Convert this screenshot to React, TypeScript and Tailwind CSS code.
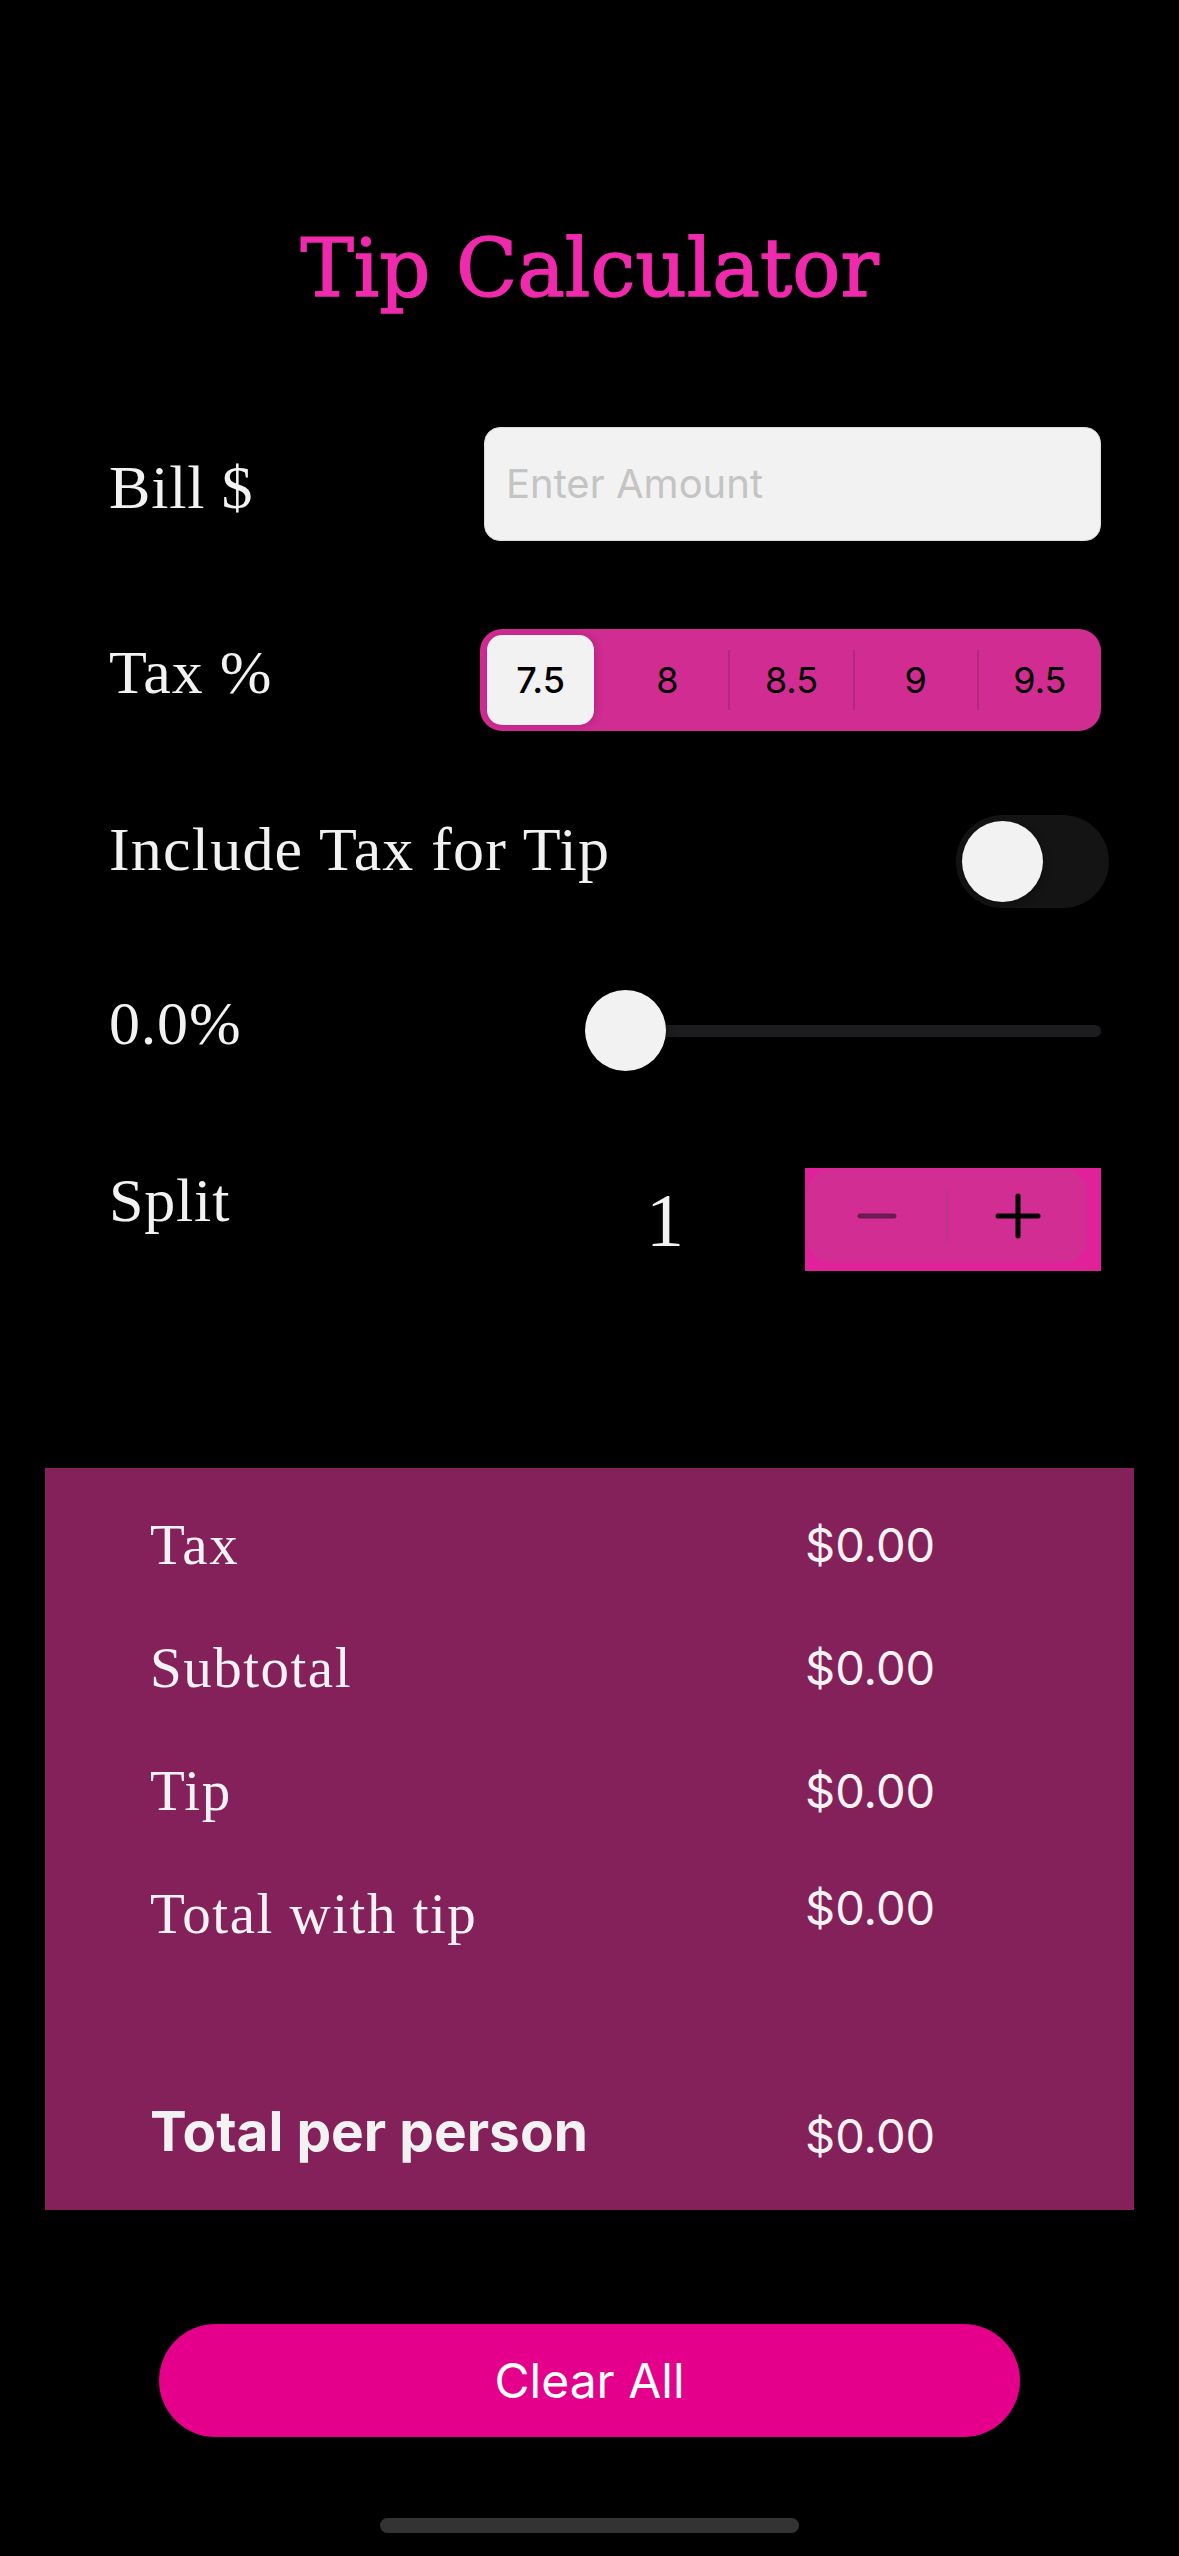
import { useState } from "react";

const serif = "font-['Liberation_Serif',serif]";
const sans = "font-['Inter',sans-serif]";

const taxRates = ["7.5", "8", "8.5", "9", "9.5"];

const results = [
  { label: "Tax", value: "$0.00", nudge: "" },
  { label: "Subtotal", value: "$0.00", nudge: "" },
  { label: "Tip", value: "$0.00", nudge: "" },
  { label: "Total with tip", value: "$0.00", nudge: "mb-[12px]" },
];

const App = () => {
  const [tax, setTax] = useState("7.5");
  const [includeTax, setIncludeTax] = useState(false);
  const [split, setSplit] = useState(1);

  return (
    <div className="min-h-[2556px] w-[1179px] bg-black text-[#f2f2f2] flex flex-col">
      <h1 className="pt-[229px] h-[309px] text-center text-[80px] leading-[80px] text-[#ef2aac] [-webkit-text-stroke:1.5px_#ef2aac] font-['DejaVu_Serif',serif]">
        Tip Calculator
      </h1>

      <div className="flex flex-col pl-[109px] pr-[78px]">
        {/* bill */}
        <div className="mt-[118px] h-[114px] flex items-center justify-between">
          <span className={`${serif} text-[62px] leading-none tracking-[0.8px] mt-[6px]`}>
            Bill $
          </span>
          <div className="w-[617px] h-[114px] rounded-[16px] bg-[#f2f2f2] border border-[#dcdcdc] flex items-center px-[21px]">
            <input
              placeholder="Enter Amount"
              className={`${sans} w-full bg-transparent outline-none text-[40px] text-black placeholder:text-[#c4c4c4]`}
            />
          </div>
        </div>

        {/* tax */}
        <div className="mt-[88px] h-[102px] flex items-center justify-between">
          <span className={`${serif} text-[62px] leading-none tracking-[0.8px] mb-[16px]`}>
            Tax %
          </span>
          <div className="w-[621px] h-[102px] rounded-[22px] bg-[#d02c92] py-[6px] flex items-stretch">
            {taxRates.map((rate, i) => {
              const selected = rate === tax;
              const prevSelected = i > 0 && taxRates[i - 1] === tax;
              return (
                <div key={rate} className="flex-1 flex items-center">
                  {i > 0 && (
                    <div
                      className={`w-[2px] h-[60px] ${
                        selected || prevSelected ? "bg-transparent" : "bg-[#b5287f]"
                      }`}
                    />
                  )}
                  <button
                    onClick={() => setTax(rate)}
                    className={`${sans} flex-1 h-full rounded-[15px] text-[36px] text-black ${
                      selected
                        ? "ml-[7px] mr-[10px] bg-[#f2f2f2] font-medium shadow-[2px_0_8px_rgba(0,0,0,0.15)]"
                        : "bg-transparent"
                    }`}
                  >
                    {rate}
                  </button>
                </div>
              );
            })}
          </div>
        </div>

        {/* include tax */}
        <div className="mt-[84px] h-[93px] flex items-center justify-between">
          <span className={`${serif} text-[62px] leading-none tracking-[1.2px] mb-[26px]`}>
            Include Tax for Tip
          </span>
          <button
            onClick={() => setIncludeTax(!includeTax)}
            className={`w-[153px] h-[93px] -mr-[8px] rounded-full p-[6px] flex ${
              includeTax ? "bg-[#34c759] justify-end" : "bg-[#141414] justify-start"
            }`}
          >
            <span className="w-[81px] h-[81px] rounded-full bg-[#f2f2f2] shadow-[0_3px_8px_rgba(0,0,0,0.3)]" />
          </button>
        </div>

        {/* tip slider */}
        <div className="mt-[82px] h-[81px] flex items-center justify-between">
          <span className={`${serif} text-[62px] leading-none tracking-[0.8px] mb-[16px]`}>
            0.0%
          </span>
          <div className="relative w-[516px] h-[81px] flex items-center">
            <div className="w-full h-[12px] rounded-full bg-[#1c1c1e]" />
            <div className="absolute left-0 top-0 w-[81px] h-[81px] rounded-full bg-[#f2f2f2] shadow-[0_3px_8px_rgba(0,0,0,0.3)]" />
          </div>
        </div>

        {/* split */}
        <div className="mt-[97px] h-[103px] flex items-center">
          <span className={`${serif} flex-1 text-[62px] leading-none tracking-[0.8px] mb-[40px]`}>
            Split
          </span>
          <span className={`${serif} w-[80px] mr-[100px] text-center text-[76px] leading-none`}>
            {split}
          </span>
          <div className="w-[296px] h-[103px] bg-[#e0219a] pl-[2px] pr-[14px] pt-[1px] pb-[8px] flex">
            <div className="flex-1 rounded-[24px] bg-[#d12d92] flex items-center">
              <button
                onClick={() => setSplit(Math.max(1, split - 1))}
                className="flex-1 h-full flex items-center justify-center"
              >
                <svg width="42" height="8" viewBox="0 0 42 8">
                  <path d="M4 4h34" stroke="#6e1a52" strokeWidth="5" strokeLinecap="round" />
                </svg>
              </button>
              <div className="w-[2px] h-[52px] bg-[#b8368a]" />
              <button
                onClick={() => setSplit(split + 1)}
                className="flex-1 h-full flex items-center justify-center"
              >
                <svg width="46" height="46" viewBox="0 0 46 46">
                  <path d="M3 23h40M23 3v40" stroke="#000" strokeWidth="5" strokeLinecap="round" />
                </svg>
              </button>
            </div>
          </div>
        </div>
      </div>

      {/* results */}
      <div className="mt-[197px] mx-[45px] bg-[#84205a] pl-[105px] pt-[15px] pb-[17px]">
        {results.map((row) => (
          <div key={row.label} className="h-[123px] grid grid-cols-[655px_1fr] items-center">
            <span className={`${serif} text-[57px] leading-none tracking-[1.5px]`}>{row.label}</span>
            <span className={`${sans} text-[47px] leading-none ${row.nudge}`}>{row.value}</span>
          </div>
        ))}
        <div className="mt-[95px] h-[123px] grid grid-cols-[655px_1fr] items-center">
          <span className={`${sans} text-[55px] leading-none font-bold`}>
            Total per person
          </span>
          <span className={`${sans} text-[47px] leading-none mt-[8px]`}>$0.00</span>
        </div>
      </div>

      <button
        onClick={() => {
          setTax("7.5");
          setIncludeTax(false);
          setSplit(1);
        }}
        className={`${sans} mt-[114px] self-center w-[861px] h-[113px] rounded-full bg-[#e5008c] text-white text-[48px]`}
      >
        Clear All
      </button>

      <div className="mt-[81px] self-center w-[419px] h-[15px] rounded-full bg-[#333333]" />
    </div>
  );
};

export default App;
